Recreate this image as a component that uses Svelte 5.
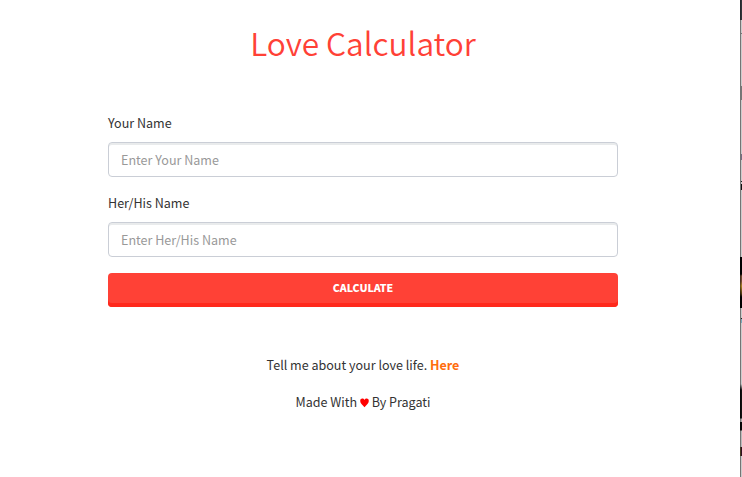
<script>
  const fields = [
    { id: 'your-name', label: 'Your Name', hint: 'Enter Your Name' },
    { id: 'their-name', label: 'Her/His Name', hint: 'Enter Her/His Name' }
  ];
</script>

<div class="page">
  <main>
    <h1>Love Calculator</h1>
    <form onsubmit={(e) => e.preventDefault()}>
      {#each fields as field}
        <div class="field">
          <label for={field.id}>{field.label}</label>
          <input id={field.id} type="text" placeholder={field.hint} />
        </div>
      {/each}
      <button type="submit">CALCULATE</button>
    </form>
    <footer>
      <p>Tell me about your love life. <a href="#here">Here</a></p>
      <p>Made With <svg width="9" height="10" viewBox="0 0 9 10"><path d="M4.5 9.2C2.8 7.2.2 5.4.2 2.9.2.1 3.4-.2 4.5 1.9 5.6-.2 8.8.1 8.8 2.9 8.8 5.4 6.2 7.2 4.5 9.2Z" fill="#f00" /></svg> By Pragati</p>
    </footer>
  </main>
  <div class="edge"></div>
</div>

<style>
  :global(body) { background: #fff; }
  .page {
    display: flex;
    height: 477px;
    overflow: hidden;
    font-family: "Noto Sans CJK SC", "Noto Sans", sans-serif;
    font-size: 12.55px;
    color: #333;
  }
  main {
    width: 740px;
    box-sizing: border-box;
    padding: 18px 122px 0 108px;
  }
  h1 {
    margin: 0;
    height: 48px;
    line-height: 48px;
    text-align: center;
    font-size: 31.6px;
    font-weight: 350;
    color: #ff4136;
    white-space: nowrap;
  }
  form { padding-top: 45px; }
  .field { height: 80px; }
  label { display: block; height: 31px; line-height: 23px; }
  input {
    display: block;
    box-sizing: border-box;
    width: 100%;
    height: 35px;
    padding: 0 12px;
    border: 1px solid #caced6;
    border-radius: 4px;
    background: #fff;
    box-shadow: inset 0 2px 0 #e9ebec;
    font: inherit;
    color: #333;
    outline: none;
  }
  input::placeholder { color: #999; opacity: 1; }
  button {
    display: block;
    width: 100%;
    height: 34px;
    margin-top: 2px;
    padding: 0 0 6px;
    border: 0;
    border-radius: 4px;
    background: #ff4136;
    box-shadow: inset 0 -4px 0 #ff291c;
    font: inherit;
    font-size: 10.6px;
    font-weight: 900;
    color: #fff;
  }
  footer { padding-top: 47px; text-align: center; }
  p { margin: 0; height: 37px; line-height: 22px; }
  a { color: #ff6c0c; font-weight: 700; text-decoration: none; }
  svg { vertical-align: -1px; }
  .edge {
    width: 2px;
    background:
      linear-gradient(
        #25292d 0 20px, #757575 20px 257px, #000 257px 274px,
        #482e1e 276px 281px, #6c5217 286px, #2f220a 294px, #000 297px 308px,
        #757575 308px 384px, #080808 390px 418px, #777 419px 422px,
        #050505 422px 430px, #757575 431px 447px, #453b20 447px 456px, #757575 456px
      ) 0 0 / 1px 100% no-repeat,
      linear-gradient(
        #30353a 0 20px, #ccc 20px 33px, #777 33px 34px, #ccc 34px 86px,
        #777 86px 100px, #ccc 100px 154px, #766d82 154px 160px,
        #ccc 160px 181px, #222 181px 182px, #ccc 182px 184px,
        #111 184px 190px, #ccc 190px 257px, #000 257px 274px,
        #704830 276px 281px, #a88024 286px, #493510 294px, #000 297px 308px,
        #ccc 308px 318px, #222 318px 319px, #77aabb 319px 323px,
        #ccc 323px 384px, #111 390px 418px, #aaa 419px 422px,
        #080808 422px 430px, #bbb 431px 447px, #301020 447px 456px, #ccc 456px
      ) 1px 0 / 1px 100% no-repeat;
  }
</style>
